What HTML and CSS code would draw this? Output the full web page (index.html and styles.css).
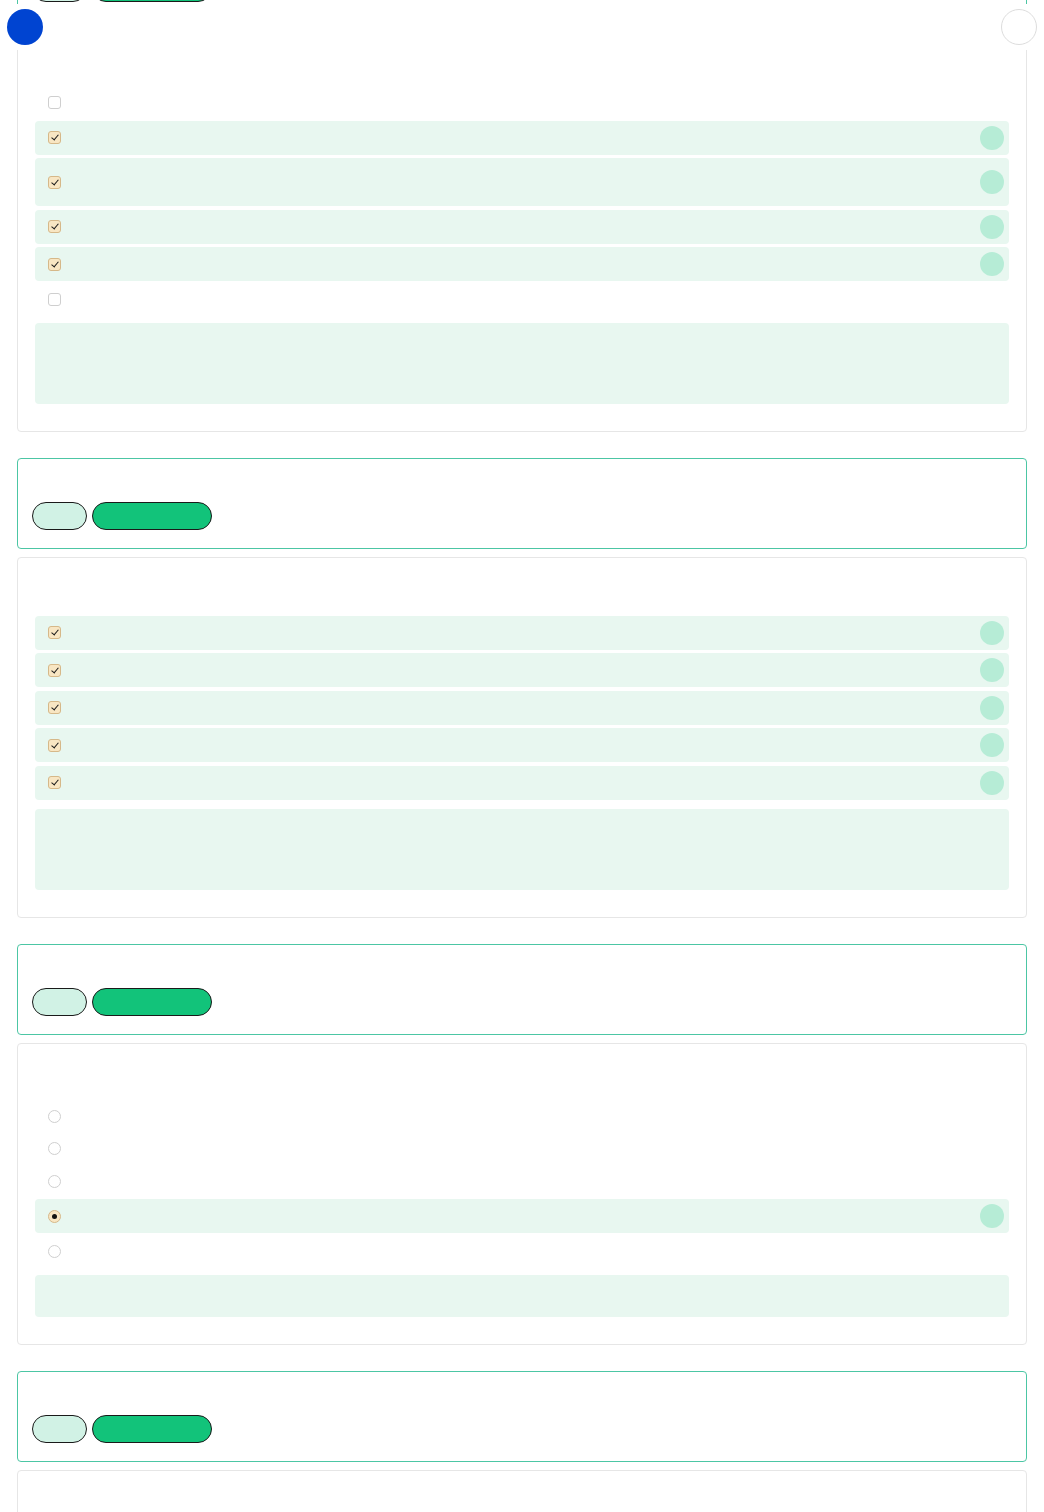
FILE: index.html
```html
<!DOCTYPE html>
<html lang="en">
    <head>
        <meta charset="UTF-8">
        <meta name="viewport" content="width=device-width, initial-scale=1.0">
        <title>Quiz Review</title>
        <link rel="stylesheet" href="styles.css">
    </head>
    <body>
        <div class="topbar">
            <button class="nav-btn nav-prev" aria-label="Previous"></button>
            <button class="nav-btn nav-next" aria-label="Next"></button>
        </div>

        <div class="quiz">
            <div class="question-head">
                <div class="actions">
                    <button class="btn btn-light"></button>
                    <button class="btn btn-main"></button>
                </div>
            </div>
            <div class="question-body">
                <div class="options">
                    <div class="option"><span class="box"></span></div>
                    <div class="option correct"><span class="box on"></span><span class="badge"></span></div>
                    <div class="option correct tall"><span class="box on"></span><span class="badge"></span></div>
                    <div class="option correct"><span class="box on"></span><span class="badge"></span></div>
                    <div class="option correct"><span class="box on"></span><span class="badge"></span></div>
                    <div class="option"><span class="box"></span></div>
                </div>
                <div class="explain"></div>
            </div>

            <div class="question-head">
                <div class="actions">
                    <button class="btn btn-light"></button>
                    <button class="btn btn-main"></button>
                </div>
            </div>
            <div class="question-body">
                <div class="options">
                    <div class="option correct"><span class="box on"></span><span class="badge"></span></div>
                    <div class="option correct"><span class="box on"></span><span class="badge"></span></div>
                    <div class="option correct"><span class="box on"></span><span class="badge"></span></div>
                    <div class="option correct"><span class="box on"></span><span class="badge"></span></div>
                    <div class="option correct"><span class="box on"></span><span class="badge"></span></div>
                </div>
                <div class="explain"></div>
            </div>

            <div class="question-head">
                <div class="actions">
                    <button class="btn btn-light"></button>
                    <button class="btn btn-main"></button>
                </div>
            </div>
            <div class="question-body">
                <div class="options">
                    <div class="option"><span class="box radio"></span></div>
                    <div class="option"><span class="box radio"></span></div>
                    <div class="option"><span class="box radio"></span></div>
                    <div class="option correct"><span class="box radio on"></span><span class="badge"></span></div>
                    <div class="option"><span class="box radio"></span></div>
                </div>
                <div class="explain short"></div>
            </div>

            <div class="question-head">
                <div class="actions">
                    <button class="btn btn-light"></button>
                    <button class="btn btn-main"></button>
                </div>
            </div>
            <div class="question-body">
                <div class="options"></div>
            </div>
        </div>
    </body>
</html>
```

FILE: styles.css
```css
* {
    margin: 0;
    padding: 0;
    box-sizing: border-box;
}

body {
    font-family: 'Liberation Sans', Arial, sans-serif;
    background: white;
}

/* page is shown scrolled down a little */
.quiz {
    margin-top: -70px;
    padding: 0 17px;
    display: flex;
    flex-direction: column;
}

.question-head {
    border: 1px solid #4cc6a4;
    border-radius: 4px;
    padding: 43px 14px 18px;
    margin-top: 26px;
}

.quiz > .question-head:first-child {
    margin-top: 0;
}

.actions {
    display: flex;
    gap: 5px;
}

.btn {
    height: 28px;
    border: 1px solid #1a1a1a;
    border-radius: 14px;
}

.btn-light {
    width: 55px;
    background: #d1f2e5;
}

.btn-main {
    width: 120px;
    background: #12c37a;
}

.question-body {
    border: 1px solid #e6e6e6;
    border-radius: 4px;
    padding: 58px 17px 27px;
    margin-top: 8px;
}

.options {
    display: flex;
    flex-direction: column;
    gap: 3.5px;
}

.option {
    display: flex;
    align-items: center;
    justify-content: space-between;
    height: 29px;
    padding: 0 5px 0 13px;
    border-radius: 4px;
}

.option.correct {
    height: 34px;
    background: #e8f7f0;
}

.option.tall {
    height: 48px;
}

/* checkbox / radio marks */
.box {
    position: relative;
    width: 13px;
    height: 13px;
    border: 1px solid #cfcfcf;
    border-radius: 3px;
    background: white;
}

.box.on {
    background: #f8e6c3;
    border-color: #d6b889;
}

.box.on::after {
    content: '';
    position: absolute;
    left: 4px;
    top: 1px;
    width: 3px;
    height: 6px;
    border: solid #1a1a1a;
    border-width: 0 1.5px 1.5px 0;
    transform: rotate(40deg);
}

.box.radio {
    border-radius: 50%;
}

.box.radio.on::after {
    left: 3px;
    top: 3px;
    width: 5px;
    height: 5px;
    border: none;
    border-radius: 50%;
    background: #111;
    transform: none;
}

.badge {
    width: 24px;
    height: 24px;
    border-radius: 50%;
    background: #b6ecd6;
}

.explain {
    margin-top: 9px;
    height: 81px;
    background: #e8f7f0;
    border-radius: 4px;
}

.explain.short {
    height: 42px;
}

/* floating header with navigation */
.topbar {
    position: fixed;
    top: 4px;
    left: 0;
    right: 0;
    height: 46px;
    background: white;
    z-index: 10;
}

.nav-btn {
    position: absolute;
    top: 5px;
    width: 36px;
    height: 36px;
    border-radius: 50%;
}

.nav-prev {
    left: 7px;
    background: #0044d1;
    border: none;
}

.nav-next {
    right: 7px;
    background: white;
    border: 1px solid #dddddd;
}
```
